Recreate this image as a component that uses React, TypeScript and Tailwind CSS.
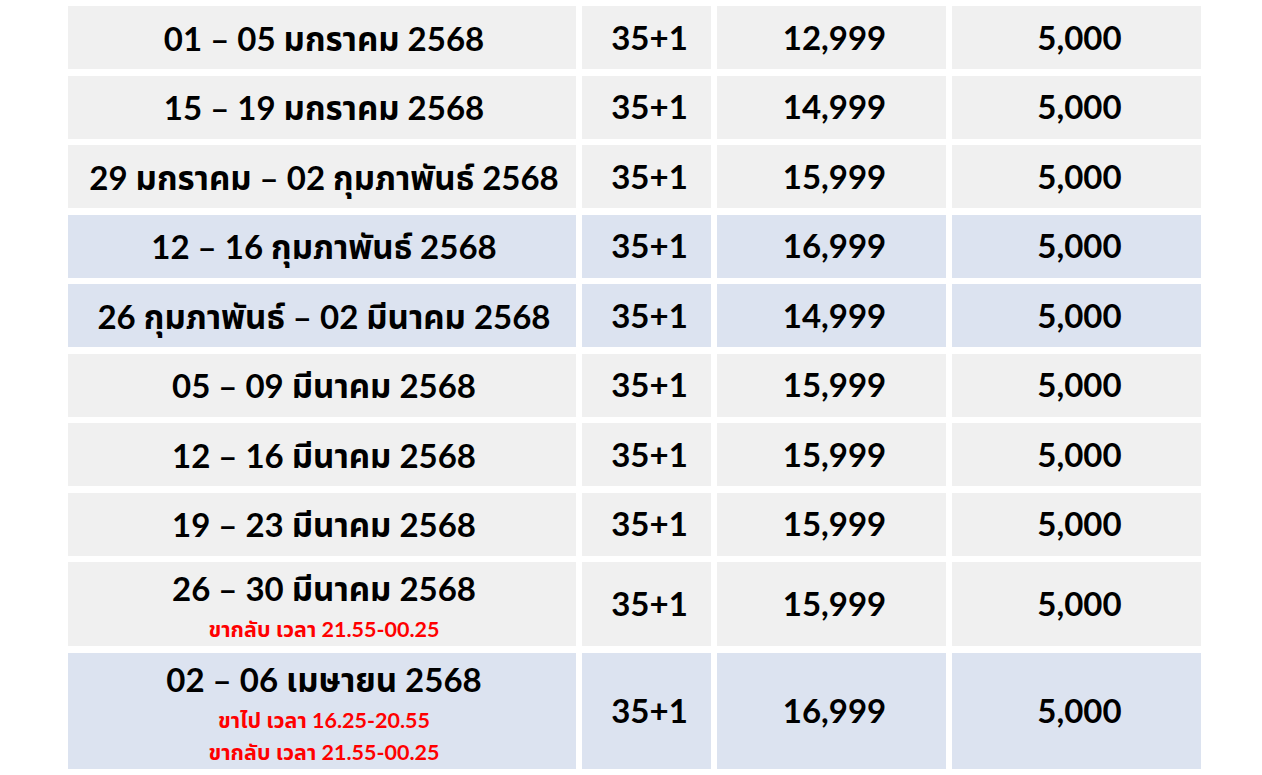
type Row = {
  date: string
  notes?: string[]
  price: string
  blue?: boolean
}

const rows: Row[] = [
  { date: "01 – 05 มกราคม 2568", price: "12,999" },
  { date: "15 – 19 มกราคม 2568", price: "14,999" },
  { date: "29 มกราคม – 02 กุมภาพันธ์ 2568", price: "15,999" },
  { date: "12 – 16 กุมภาพันธ์ 2568", price: "16,999", blue: true },
  { date: "26 กุมภาพันธ์ – 02 มีนาคม 2568", price: "14,999", blue: true },
  { date: "05 – 09 มีนาคม 2568", price: "15,999" },
  { date: "12 – 16 มีนาคม 2568", price: "15,999" },
  { date: "19 – 23 มีนาคม 2568", price: "15,999" },
  { date: "26 – 30 มีนาคม 2568", notes: ["ขากลับ เวลา 21.55-00.25"], price: "15,999" },
  {
    date: "02 – 06 เมษายน 2568",
    notes: ["ขาไป เวลา 16.25-20.55", "ขากลับ เวลา 21.55-00.25"],
    price: "16,999",
    blue: true,
  },
]

export default function App() {
  return (
    <div
      className="min-h-screen bg-white pt-[6px] pl-[68px] text-black"
      style={{ fontFamily: "Lato, 'Noto Sans', 'Noto Sans Thai', sans-serif" }}
    >
      <div className="grid w-[1133px] grid-cols-[508px_129px_229px_249px] gap-x-[6px] gap-y-[6.5px]">
        {rows.map((row) => {
          const bg = row.blue ? "bg-[#dce3f0]" : "bg-[#f0f0f0]"
          const cell = `${bg} flex flex-col items-center justify-center text-[33px] font-bold`
          return (
            <div key={row.date} className="contents">
              <div
                className={`${cell} pl-[4px] ${row.notes ? (row.notes.length > 1 ? "h-[116px]" : "h-[84px]") : "h-[63px]"}`}
              >
                <div className="leading-[50px]">{row.date}</div>
                {row.notes?.map((n) => (
                  <div key={n} className="text-[21.5px] leading-[32px] text-[#ff0000]">
                    {n}
                  </div>
                ))}
              </div>
              <div className={`${cell} pl-[6px] text-[33.5px]`}>35+1</div>
              <div className={`${cell} pl-[6px] text-[33.5px]`}>{row.price}</div>
              <div className={`${cell} pl-[6px] text-[33.5px]`}>5,000</div>
            </div>
          )
        })}
      </div>
    </div>
  )
}
